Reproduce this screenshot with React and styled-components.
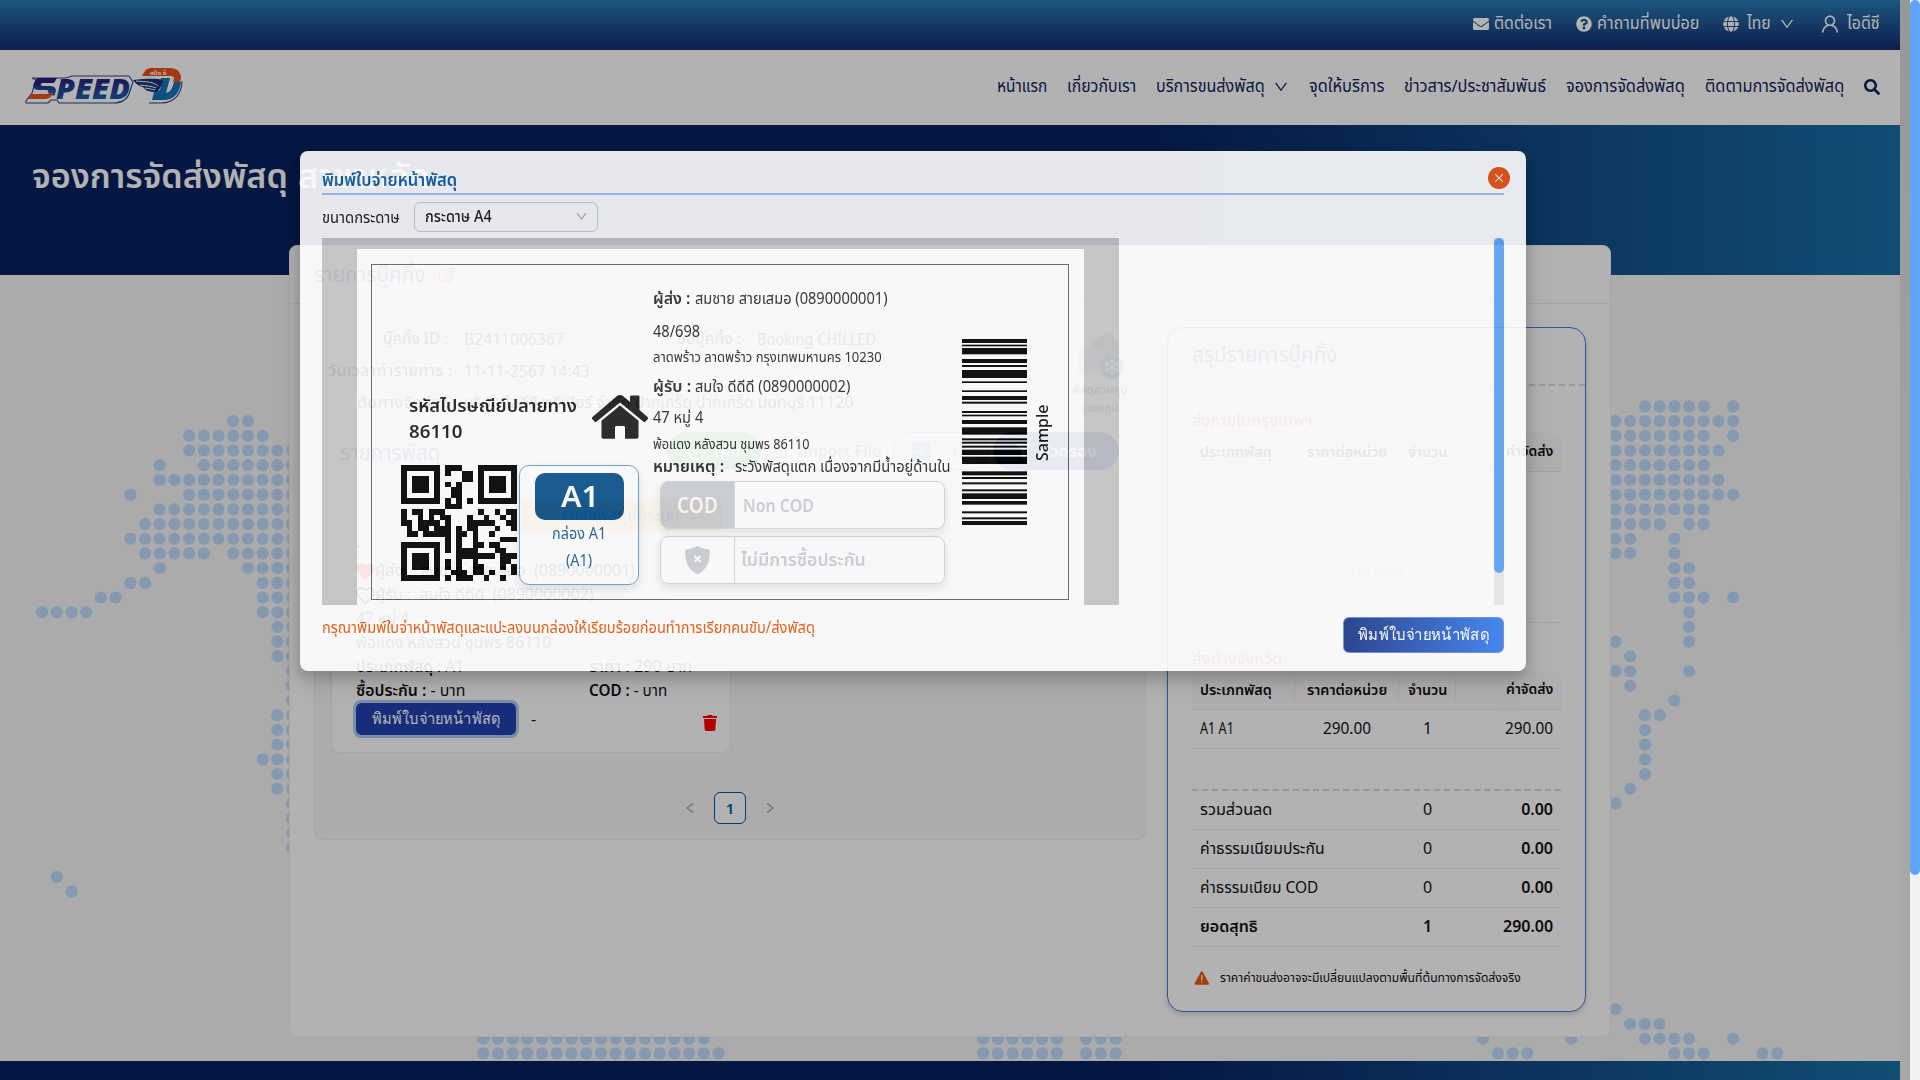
import React, { useLayoutEffect, useRef, useState } from "react";
import styled, { createGlobalStyle } from "styled-components";
import {
  FaEnvelope, FaQuestionCircle, FaGlobe, FaSearch, FaTrash, FaRegEdit,
  FaHeart, FaRegHeart, FaSnowflake, FaFilter,
} from "react-icons/fa";
import { AiOutlineUser, AiOutlineDown, AiOutlineLeft, AiOutlineRight, AiOutlineClose, AiOutlinePlusCircle, AiOutlineFileExcel, AiOutlineSortAscending } from "react-icons/ai";
import { IoWarning } from "react-icons/io5";

const Global = createGlobalStyle`
  * { box-sizing: border-box; }
  html, body { margin: 0; overflow: hidden; }
  body { font-family: "Noto Sans", "Noto Sans Thai", "Open Sans", sans-serif; font-size: 15px; color: #111; }
`;

/* Text that always fills exactly the width reserved for it. */
const FitBox = styled.span`
  display: inline-block;
  flex: none;
  width: ${(p) => p.$w}px;
  white-space: nowrap;
  line-height: inherit;
`;
const FitInner = styled.span`
  display: inline-block;
  transform-origin: 0 50%;
  line-height: inherit;
`;
function Fit({ w, children }) {
  const ref = useRef(null);
  const [k, setK] = useState(1);
  useLayoutEffect(() => {
    const n = ref.current.offsetWidth;
    if (n) setK(w / n);
  }, [w, children]);
  return (
    <FitBox $w={w}>
      <FitInner ref={ref} style={{ transform: `scaleX(${k})` }}>{children}</FitInner>
    </FitBox>
  );
}

const Root = styled.div`
  display: grid;
  grid-template-columns: 1900px 10px 10px;
  width: 1920px;
  height: 1080px;
  overflow: hidden;
`;
const Page = styled.div`display: flex; flex-direction: column; height: 1080px; overflow: hidden;`;
const InnerTrack = styled.div`background: linear-gradient(#d6dada, #eeefef 60%, #f1f1f1);`;
const Track = styled.div`background: #f1f1f1; position: relative; z-index: 5;`;
const Thumb = styled.div`height: ${(p) => p.$h}px; background: #60a5fa; border-radius: 5px;`;
const Mask = styled.div`position: fixed; left: 0; top: 0; width: 1910px; height: 1080px; background: rgba(0, 0, 0, 0.3); z-index: 3;`;

const TopBar = styled.div`
  height: 50px;
  flex: none;
  background: linear-gradient(#277bb4, #152b6d);
  color: #fff;
  display: flex;
  align-items: center;
  justify-content: flex-end;
  gap: 24px;
  padding: 0 20px 2px 0;
  font-size: 17px;
`;
const TopItem = styled.div`
  display: flex; align-items: center; gap: ${(p) => p.$gap || 5}px;
  svg { flex: none; }
`;

const NavBar = styled.div`
  height: 75px;
  flex: none;
  background: #fff;
  display: flex;
  align-items: center;
  justify-content: space-between;
  padding: 0 20px 1px 24px;
`;
const NavLinks = styled.nav`
  display: flex; align-items: center; gap: 20px; color: #12225a; font-size: 17px;
`;
const NavItem = styled.div`display: flex; align-items: center; gap: 8px;`;

const Hero = styled.div`
  height: 150px;
  flex: none;
  background: linear-gradient(90deg, #062160 60%, #1a6fa6);
  color: #fff;
  padding: 27px 0 0 32px;
  font-size: 34px;
  font-weight: 600;
  line-height: 46px;
  display: flex;
  gap: 10px;
`;
const Main = styled.main`
  height: 786px; flex: none; background: #f5f5f5; position: relative; padding-left: 289px;
`;
const Dots = styled.svg`position: absolute; left: 0; top: 0;`;
const Footer = styled.div`flex: 1; background: linear-gradient(90deg, #062160 60%, #1a6fa6);`;

const Card = styled.section`
  position: relative;
  width: 1322px;
  height: 792px;
  margin-top: -30px;
  background: #fff;
  border: 1px solid #f0f0f0;
  border-radius: 8px;
`;
const CardHead = styled.header`
  height: 58px;
  border-bottom: 1px solid #ededed;
  padding-left: 24px;
  display: flex;
  align-items: center;
  gap: 9px;
  color: #0e5a92;
  font-size: 22px;
`;
const EditBox = styled.span`
  width: 25px; height: 25px; border: 1px solid #eee; border-radius: 4px;
  display: grid; place-items: center; color: #ea580c; font-size: 16px;
`;
const Columns = styled.div`display: flex; gap: 21px; padding: 23px 0 0 24px;`;
const Left = styled.div`width: 832px;`;
const Info = styled.div`height: 100px; display: flex; justify-content: space-between; padding-right: 2px;`;
const InfoRows = styled.div`margin-top: -4px; font-size: 16px;`;
const InfoRow = styled.div`height: 32px; display: flex; align-items: center; gap: 16px;`;
const InfoLabel = styled.div`width: ${(p) => p.$w}px; text-align: right; color: #222; font-weight: 500;`;
const Chilled = styled.div`
  width: 88px; height: 90px; border-radius: 8px; background: #eaf4ff; text-align: center;
  font-size: 12px; line-height: 18px; font-weight: 600; color: #555; padding-top: 4px;
  svg { display: block; margin: 0 auto; }
`;
const Panel = styled.div`
  height: 413px; border: 1px solid #eee; border-radius: 8px; background: #f7f7f7;
  display: flex; flex-direction: column;
`;
const PanelHead = styled.div`
  height: 70px; padding: 4px 26px 0 25px; display: flex; align-items: flex-start; justify-content: space-between;
  color: #0e5a92; font-size: 21px; line-height: 40px;
`;
const HeadTitle = styled.div`display: flex; align-items: center; gap: 6px;`;
const Check = styled.span`width: 15px; height: 15px; border: 1px solid #ddd; border-radius: 4px; display: inline-block;`;
const Pills = styled.div`display: flex; gap: 5px;`;
const Pill = styled.div`
  width: ${(p) => p.$w}px; height: 38px; border-radius: 19px; background: ${(p) => p.$bg}; color: ${(p) => p.$fg};
  border: 1px solid ${(p) => p.$bd}; display: flex; align-items: center; justify-content: center; gap: ${(p) => p.$gap || 8}px;
  font-size: 16px; font-weight: 600;
`;
const Item = styled.div`
  width: 400px; height: 255px; margin-left: 16px; border: 1px solid #eee; border-radius: 8px; background: #fff;
  padding: 0 9px 0 24px;
`;
const Badge = styled.div`
  width: 200px; height: 32px; margin-left: auto; background: #fdc36b; color: #2563a8; border-radius: 4px;
  text-align: center; line-height: 32px; font-size: 17px;
`;
const Line = styled.div`
  height: ${(p) => p.$h || 24}px; display: flex; align-items: center; font-size: 16px;
  justify-content: ${(p) => (p.$spread ? "space-between" : "flex-start")};
  gap: ${(p) => p.$gap || 0}px;
`;
const Half = styled.div`width: 233px; display: flex; gap: 4px;`;
const B = styled.b`font-weight: 600;`;
const RowButton = styled.button`
  width: 160px; height: 32px; border: 0; border-radius: 5px; background: #213fb0; color: #fff; margin: 0;
  outline: 3px solid #a9cdf0; font: 16px/30px "Noto Sans", sans-serif; padding: 0 0 2px;
`;
const Trash = styled(FaTrash)`margin: 7px 3px 0 0; color: #ff0000; font-size: 16px;`;
const Pager = styled.div`
  margin: 39px 0 0 368px; display: flex; align-items: center; gap: 17px; color: #999; font-size: 14px;
`;
const PageNo = styled.span`
  width: 32px; height: 32px; border: 1px solid #00599a; border-radius: 6px; color: #00599a; font-weight: 600;
  display: grid; place-items: center; margin: 0; background: #fff; font-size: 15px;
`;

const Summary = styled.aside`
  width: 419px; height: 685px; border: 1px solid #3b7fe8; border-radius: 16px; background: #fff;
  box-shadow: 0 3px 5px rgba(0, 0, 0, 0.15);
  display: flex; flex-direction: column;
`;
const SumTitle = styled.div`
  height: 58px; border-bottom: 2px dashed #ddd; padding-left: 24px; color: #0e5a92; font-size: 21px; line-height: 53px;
`;
const SumBody = styled.div`padding: 0 24px;`;
const Zone = styled.div`color: #ea580c; font-size: 16px; font-weight: 500; height: 26px; line-height: 26px; margin-top: ${(p) => p.$mt}px;`;
const Grid = styled.div`
  display: grid; grid-template-columns: 103px 104px 57px 1fr; align-items: center; height: 39px;
  border-bottom: 1px solid #ececec; font-size: 16px;
  background: ${(p) => (p.$head ? "#fafafa" : "transparent")};
  border-radius: ${(p) => (p.$head ? "8px 8px 0 0" : 0)};
`;
const Cell = styled.div`
  text-align: ${(p) => p.$a || "center"}; font-weight: ${(p) => (p.$b ? 600 : 400)};
  padding: 0 8px; height: ${(p) => (p.$sep ? 22 : 38)}px; line-height: ${(p) => (p.$sep ? 21 : 36)}px;
  border-right: ${(p) => (p.$sep ? "1px solid #ececec" : 0)}; white-space: nowrap;
  display: flex; justify-content: ${(p) => ({ left: "flex-start", right: "flex-end" }[p.$a] || "center")};
  font-size: ${(p) => (p.$sep || p.$small ? 14 : 16)}px;
`;
const Empty = styled.div`
  height: 151px; border-bottom: 1px solid #ececec; display: flex; flex-direction: column; align-items: center;
  padding-top: 40px; color: #c4c4c4; font-size: 14px; gap: 8px;
`;
const Dash = styled.div`height: 42px; border-bottom: 2px dashed #d5d9de;`;
const Note = styled.div`display: flex; align-items: center; gap: 9px; height: 62px; padding-left: 1px; font-size: 13px;`;

const Modal = styled.div`
  position: fixed; left: 300px; top: 151px; width: 1226px; height: 520px; background: #fff; border-radius: 8px;
  opacity: 0.9; z-index: 4; box-shadow: 0 6px 16px rgba(0, 0, 0, 0.25), 0 9px 28px 8px rgba(0, 0, 0, 0.08);
  padding: 16px 22px 0;
`;
const Close = styled.div`
  position: absolute; right: 16px; top: 16px; width: 22px; height: 22px; border-radius: 50%; background: #ee5514;
  color: #fff; display: grid; place-items: center; font-size: 12px;
`;
const ModalTitle = styled.div`
  height: 28px; border-bottom: 2px solid #a6c5fb; color: #12609f; font-size: 17px; font-weight: 600; line-height: 26px;
`;
const SizeRow = styled.div`
  margin-top: 7px; height: 30px; display: flex; align-items: center; gap: 14px; font-size: 15.5px; color: #222; line-height: 26px;
`;
const Select = styled.div`
  width: 184px; height: 30px; border: 1px solid #cfcfd3; border-radius: 6px; display: flex; align-items: center;
  justify-content: space-between; padding: 0 9px 2px 10px; font-weight: 500;
  svg { color: #aaa; font-size: 13px; }
`;
const Scroll = styled.div`margin-top: 6px; height: 367px; display: flex; justify-content: space-between; overflow: hidden;`;
const Desk = styled.div`width: 797px; background: #c8c8c8; padding: 11px 35px 0;`;
const Paper = styled.div`width: 727px; height: 356px; background: #fff; padding: 15px 0 0 14px;`;
const Frame = styled.div`
  width: 698px; height: 336px; border: 1.5px solid #666; color: #1f1f1f;
  display: grid; grid-template-columns: 281px 309px 1fr;
`;
const ModalTrack = styled.div`width: 10px; background: #eaeaea;`;
const LabelLeft = styled.div`padding: 130px 0 0 29px;`;
const Postal = styled.div`display: flex; gap: 15px; padding-left: 8px; height: 70px;`;
const PostalText = styled.div`margin-top: -3px; font-size: 18px; line-height: 26px; font-weight: 600; width: 168px;`;
const Codes = styled.div`display: flex; gap: 2px; width: 300px;`;
const BoxCard = styled.div`
  width: 120px; height: 120px; border: 1px solid #6ea0c9; border-radius: 10px; padding-top: 7px; text-align: center;
  color: #1c6099; font-size: 15.5px; line-height: 27px; box-shadow: 0 4px 8px rgba(0, 0, 0, 0.12);
`;
const BoxName = styled.div`
  width: 89px; height: 47px; margin: 0 auto 0; border-radius: 10px; background: #09518e; color: #fff;
  font-size: 29px; font-weight: 600; line-height: 46px;
`;
const Address = styled.div`color: #2b2b2b; padding-top: 18px;`;
const ARow = styled.div`
  height: ${(p) => p.$h}px; display: flex; align-items: center; gap: ${(p) => p.$gap || 4}px; font-size: ${(p) => p.$s || 15.5}px;
`;
const Options = styled.div`padding: 6px 0 0 7px; display: flex; flex-direction: column; gap: 7px;`;
const Option = styled.div`
  width: 285px; height: 48px; border: 1px solid #d5d8de; border-radius: 8px; display: flex;
  align-items: center; color: #ccd0d8; font-size: 18px; font-weight: 600; overflow: hidden;
  box-shadow: 0 4px 8px rgba(0, 0, 0, 0.1);
`;
const OptionIcon = styled.div`
  width: 74px; height: 48px; display: grid; place-items: center; margin-right: ${(p) => (p.$fill ? 8 : 6)}px;
  background: ${(p) => (p.$fill ? "#ccd0d8" : "transparent")}; color: #fff; font-size: 21px;
  border-right: 1px solid #d5d8de;
`;
const Side = styled.div`display: flex; padding-top: 74px; height: 270px;`;
const Vertical = styled.div`
  writing-mode: vertical-rl; transform: rotate(180deg); color: #111; font: 500 16px/24px "Noto Sans"; height: 57px; margin: 65px 0 0 3px;
`;
const Foot = styled.div`
  display: flex; justify-content: space-between; align-items: flex-start; color: #ea580c; font-size: 15.5px; line-height: 22px; padding-top: 11px;
`;
const PrintButton = styled.button`
  margin-top: 1px; width: 161px; height: 36px; border: 1px solid #6c8fd6; border-radius: 6px; color: #fff; padding: 0 0 2px;
  background: linear-gradient(90deg, #1e3a8a, #3b82f6); font: 500 16px/30px "Noto Sans", sans-serif;
`;

const PITCH = 14.705;
/* [row, [first column, last column], ...] */
const DOTS = [
  [-1, [109, 113], [115, 115]],
  [0, [13, 14], [107, 115]],
  [1, [10, 15], [107, 113], [115, 115]],
  [2, [10, 17], [107, 114]],
  [3, [8, 8], [11, 17], [107, 113]],
  [4, [8, 17], [107, 114]],
  [5, [6, 6], [10, 17], [107, 115]],
  [6, [8, 17], [107, 113]],
  [7, [7, 17], [107, 110], [112, 113]],
  [8, [6, 17], [107, 108], [111, 111]],
  [9, [7, 11], [13, 17], [107, 108], [111, 111]],
  [10, [8, 8], [14, 17], [111, 112]],
  [11, [6, 7], [15, 17], [111, 112]],
  [12, [4, 5], [15, 17], [111, 113], [115, 115]],
  [13, [0, 3], [15, 17], [112, 112]],
  [14, [16, 17], [112, 112]],
  [15, [16, 17], [107, 107], [112, 112]],
  [16, [16, 17], [108, 108]],
  [17, [17, 17], [107, 108], [112, 112]],
  [18, [17, 17], [108, 108]],
  [19, [17, 17], [111, 111]],
  [20, [16, 17], [109, 110]],
  [21, [16, 17], [109, 109]],
  [22, [16, 17], [109, 109]],
  [23, [15, 17], [109, 109]],
  [24, [16, 17], [109, 109]],
  [25, [16, 17], [108, 108]],
  [26, [17, 17], [107, 107]],
  [27, [17, 17]], [28, [17, 17]], [29, [17, 17]],
  [31, [1, 1]], [32, [2, 2]],
  [40, [107, 107]],
  [41, [108, 110]],
  [42, [30, 45], [64, 69], [71, 73], [98, 98], [104, 104], [109, 112], [115, 115]],
  [43, [30, 46], [64, 69], [71, 73], [99, 101], [111, 113], [117, 118]],
];
function DotMap() {
  const out = [];
  DOTS.forEach(([r, ...runs]) =>
    runs.forEach(([a, b]) => {
      for (let c = a; c <= b; c++)
        out.push(<circle key={`${r}-${c}`} cx={42.1 + c * PITCH} cy={146.1 + r * PITCH} r="6.1" />);
    })
  );
  return <Dots width="1900" height="786" fill="#bfdbfe">{out}</Dots>;
}

const QR = [
  "1111111.111...1111111",
  "1.....1.1..11.1.....1",
  "1.111.1....11.1.111.1",
  "1.111.1.1.1...1.111.1",
  "1.111.1..11...1.111.1",
  "1.....1..11...1.....1",
  "1111111.1.1.1.1111111",
  "........111..........",
  "1.11.111......1..1.11",
  "1..1.1.11...1..1..1.1",
  "11.1111.1...11111..11",
  ".1.11.111.1.11...1..1",
  ".11.11111.11.1..1....",
  "........1.1..1....111",
  "1111111.1.1..11.11...",
  "1.....1.1.1111...11..",
  "1.111.1...1111111.111",
  "1.111.1.1.1..1....11.",
  "1.111.1.1.1..11...1.1",
  "1.....1..111.11.1...1",
  "1111111.1.111..1..1..",
];
function QrCode() {
  return (
    <svg width="116" height="116" viewBox="0 0 21 21" shapeRendering="crispEdges">
      {QR.map((row, y) => [...row].map((v, x) => (v === "1" ? <rect key={`${x}-${y}`} x={x} y={y} width="1" height="1" /> : null)))}
    </svg>
  );
}

/* [offset, thickness] of each bar, in thirds of a pixel */
const BARS = [
  [0, 12], [17, 5], [27, 19], [60, 12], [78, 6], [93, 24], [127, 5], [154, 5], [171, 12], [188, 6], [216, 6], [227, 5],
  [243, 12], [265, 22], [298, 6], [308, 6], [320, 6], [332, 16], [353, 22], [397, 12], [414, 6], [430, 6], [451, 6],
  [463, 17], [486, 11], [517, 6], [535, 6], [546, 12],
];
function Barcode() {
  return (
    <svg width="65" height="186" viewBox="0 0 65 558" preserveAspectRatio="none">
      {BARS.map(([y, h]) => <rect key={y} x="0" y={y} width="65" height={h} />)}
    </svg>
  );
}

function Tiles() {
  return (
    <svg width="19" height="19" viewBox="0 0 19 19" fill="currentColor">
      <path d="M0 0h9v9H0zM10 0h9v9h-9zM0 10h9v9H0zM10 10h9v9h-9z" />
    </svg>
  );
}

const LogoSvg = styled.svg`overflow: visible; flex: none;`;
function Logo() {
  return (
    <LogoSvg width="162" height="38" viewBox="0 0 162 38">
      <defs>
        <linearGradient id="lg" x1="0" y1="0" x2="0" y2="1">
          <stop offset="0.2" stopColor="#2b1a78" />
          <stop offset="1" stopColor="#1573b8" />
        </linearGradient>
      </defs>
      <path d="M8 10l4 2-4 13-6 8v2h22l3-3h6l2 3h54c9 0 15-4 17-12l3-9-4-6H48l-6 2z" fill="#fff" stroke="#3c3c86" strokeWidth="1.1" />
      <path d="M118 9c3-6 6-9 11-9h17c8 0 13 5 12 13-1 13-8 22-21 22h-12l4-12-14-3-6-8z" fill="#fff" />
      <path d="M158 13c0 13-8 22-21 22h-12" fill="none" stroke="#3c3c86" strokeWidth="1.1" />
      <text x="32" y="31" textLength="74" lengthAdjust="spacingAndGlyphs" fontFamily="Open Sans, Noto Sans" fontSize="29" fontWeight="800" fontStyle="italic" fill="url(#lg)">PEED</text>
      <path d="M13 10h20l-3 5H19c-3 0-3 3 0 3h7c6 0 7 4 5 8l-1 2-6-3c1-2 0-3-2-3h-7c-5 0-7-3-5-7z" fill="url(#lg)" />
      <path d="M7 26h17l5-2c-1 5-4 7-9 7H4z" fill="#e8521c" />
      <path d="M118 8c3-6 5-8 10-8h18c7 0 11 4 11 10l-1 4h-7l1-3c0-2-1-3-3-3z" fill="#e8521c" />
      <path d="M137 10h9l-4 15c4-1 6-4 7-8l1-3h7c-1 11-8 18-17 18h-12l2-8c6 0 8-3 7-14z" fill="#1573b8" />
      <path d="M109 12c11-1 22-2 30 0-1 5-3 9-6 12-9 0-12-2-14-5-5-1-8-4-10-7z" fill="#1b3478" />
      <path d="M112 13c10 1 16 0 22 5M116 17c7 1 12 1 16 3M121 20c4 1 7 1 10 2" stroke="#fff" strokeWidth="1" fill="none" />
      <text x="126" y="6.500" fontSize="6" fill="#fff" fontWeight="700">สปีด ดี</text>
    </LogoSvg>
  );
}

function House() {
  return (
    <svg width="56" height="44" viewBox="0 0 56 44" fill="#1f1f1f">
      <path d="M28 0c1.500 0 2.500.6 3.600 1.600L38 7V2c0-1 .5-1.500 1.500-1.500H46c1 0 1.500.5 1.500 1.500v13l8 7c.7.6.7 1.500.1 2.200L53.500 26.500c-.6.7-1.500.7-2.200.1L28 7.500 4.700 26.600c-.7.6-1.600.6-2.200-.1L.4 24.200c-.6-.7-.6-1.600.1-2.200L24.400 1.600C25.500.6 26.500 0 28 0z" />
      <path d="M28 10.500l18.500 15.300V42c0 1-.7 1.700-1.700 1.700H33V32.500c0-1-.6-1.500-1.500-1.500h-7c-.9 0-1.500.5-1.500 1.500v11.200H11.200c-1 0-1.700-.7-1.700-1.700V25.800z" />
    </svg>
  );
}

function Shield() {
  return (
    <svg width="25" height="29" viewBox="0 0 25 29">
      <path d="M12.500 0c3 2 7 3.200 11 3.400 1 0 1.300.5 1.300 1.400C25 15 22 24 12.500 28.500 3 24 0 15 .2 4.800c0-.9.4-1.400 1.300-1.400C5.500 3.200 9.500 2 12.500 0z" fill="#ccd0d8" />
      <path d="M9.500 10l6 6m0-6l-6 6" stroke="#fff" strokeWidth="2" />
    </svg>
  );
}

const NAV = [
  ["หน้าแรก", 50], ["เกี่ยวกับเรา", 69], ["บริการขนส่งพัสดุ", 109, true], ["จุดให้บริการ", 75],
  ["ข่าวสาร/ประชาสัมพันธ์", 142], ["จองการจัดส่งพัสดุ", 119], ["ติดตามการจัดส่งพัสดุ", 139],
];
const TOTALS = [
  ["รวมส่วนลด", 72, "0", "0.00"],
  ["ค่าธรรมเนียมประกัน", 125, "0", "0.00"],
  ["ค่าธรรมเนียม COD", 118, "0", "0.00"],
  ["ยอดสุทธิ", 58, "1", "290.00"],
];

function TableHead() {
  return (
    <Grid $head>
      <Cell $a="left" $b $sep><Fit w={72}>ประเภทพัสดุ</Fit></Cell>
      <Cell $b $sep><Fit w={80}>ราคาต่อหน่วย</Fit></Cell>
      <Cell $b $sep><Fit w={39}>จำนวน</Fit></Cell>
      <Cell $a="right" $b $small><Fit w={47}>ค่าจัดส่ง</Fit></Cell>
    </Grid>
  );
}

export default function App() {
  return (
    <Root>
      <Global />
      <Page>
        <TopBar>
          <TopItem><FaEnvelope size={16} /><Fit w={58}>ติดต่อเรา</Fit></TopItem>
          <TopItem><FaQuestionCircle size={16} /><Fit w={102}>คำถามที่พบบ่อย</Fit></TopItem>
          <TopItem $gap={8}><FaGlobe size={16} /><Fit w={24}>ไทย</Fit><AiOutlineDown size={16} /></TopItem>
          <TopItem $gap={6}><AiOutlineUser size={22} /><Fit w={33}>ไอดีซี</Fit></TopItem>
        </TopBar>
        <NavBar>
          <Logo />
          <NavLinks>
            {NAV.map(([t, w, more]) => (
              <NavItem key={t}><Fit w={w}>{t}</Fit>{more && <AiOutlineDown size={16} />}</NavItem>
            ))}
            <FaSearch size={16} />
          </NavLinks>
        </NavBar>
        <Hero><Fit w={256}>จองการจัดส่งพัสดุ</Fit><Fit w={132}>สาขาหลัก</Fit></Hero>
        <Main>
          <DotMap />
          <Card>
            <CardHead><Fit w={111}>รายการบุ๊คกิ้ง</Fit><EditBox><FaRegEdit /></EditBox></CardHead>
            <Columns>
              <Left>
                <Info>
                  <InfoRows>
                    <InfoRow>
                      <InfoLabel $w={134}><Fit w={65}>บุ๊คกิ้ง ID :</Fit></InfoLabel><Fit w={100}>B2411006367</Fit>
                      <InfoLabel $w={161}><Fit w={64}>ชื่อบุ๊คกิ้ง :</Fit></InfoLabel><Fit w={119}>Booking CHILLED</Fit>
                    </InfoRow>
                    <InfoRow><InfoLabel $w={134}><Fit w={124}>วันเวลาทำรายการ :</Fit></InfoLabel><Fit w={126}>11-11-2567 14:43</Fit></InfoRow>
                    <InfoRow><InfoLabel $w={134}><Fit w={92}>ต้นทางจัดส่ง :</Fit></InfoLabel><Fit w={390}>บริษัท ไอดีซี พรีเมียร์ จำกัด ปากเกร็ด ปากเกร็ด นนทบุรี 11120</Fit></InfoRow>
                  </InfoRows>
                  <Chilled>
                    <svg width="52" height="50" viewBox="0 0 52 50">
                      <rect x="20" y="4" width="24" height="24" rx="4" fill="#7f9fb0" transform="rotate(-28 32 16)" />
                      <rect x="4" y="18" width="28" height="24" rx="3" fill="#a7c3d2" />
                      <path d="M6 30l6-10M9 32l7-12" stroke="#fff" strokeWidth="2" />
                      <circle cx="38" cy="36" r="12" fill="#4f93c4" />
                      <FaSnowflake x="30" y="28" size={16} color="#fff" />
                    </svg>
                    <Fit w={56}>พัสดุควบคุม</Fit><Fit w={38}>อุณหภูมิ</Fit>
                  </Chilled>
                </Info>
                <Panel>
                  <PanelHead>
                    <HeadTitle><Fit w={100}>รายการพัสดุ</Fit><Check /></HeadTitle>
                    <Pills>
                      <Pill $w={94} $bg="#3fbf6a" $fg="#fff" $bd="#3fbf6a"><AiOutlinePlusCircle size={19} />เพิ่ม</Pill>
                      <Pill $w={122} $bg="#fff" $fg="#3fae64" $bd="#9fdcb2"><AiOutlineFileExcel size={16} /><Fit w={84}>Import File</Fit></Pill>
                      <Pill $w={95} $bg="#fff" $fg="#7fb2dc" $bd="#6d8fe0" $gap={18}><Tiles /><AiOutlineSortAscending size={20} /></Pill>
                      <Pill $w={126} $bg="#1e46c0" $fg="#fff" $bd="#1e46c0"><FaFilter size={15} /><Fit w={58}>ตัวกรอง</Fit></Pill>
                    </Pills>
                  </PanelHead>
                  <Item>
                    <Badge><Fit w={118}>รอส่งพัสดุเข้าระบบ</Fit></Badge>
                    <Line $h={28} $spread><span>-</span><Check /></Line>
                    <Line><FaHeart size={19} color="#ff0000" /><Fit w={260}>ผู้ส่ง :&nbsp; สมชาย สายเสมอ&nbsp; (0890000001)</Fit></Line>
                    <Line><FaRegHeart size={19} /><Fit w={218}>ผู้รับ :&nbsp; สมใจ ดีดีดี&nbsp; (0890000002)</Fit></Line>
                    <Line><Fit w={53}>47 หมู่ 4</Fit></Line>
                    <Line><Fit w={195}>พ้อแดง หลังสวน ชุมพร 86110</Fit></Line>
                    <Line><Half><Fit w={108}><B>ประเภทพัสดุ :</B> A1</Fit></Half><Fit w={103}><B>ราคา :</B> 290 บาท</Fit></Line>
                    <Line><Half><Fit w={109}><B>ซื้อประกัน :</B> - บาท</Fit></Half><Fit w={78}><B>COD :</B> - บาท</Fit></Line>
                    <Line $h={32} $spread>
                      <Line $gap={15}><RowButton><Fit w={128}>พิมพ์ใบจ่ายหน้าพัสดุ</Fit></RowButton>-</Line>
                      <Trash />
                    </Line>
                  </Item>
                  <Pager><AiOutlineLeft /><PageNo>1</PageNo><AiOutlineRight /></Pager>
                </Panel>
              </Left>
              <Summary>
                <SumTitle><Fit w={145}>สรุปรายการบุ๊คกิ้ง</Fit></SumTitle>
                <SumBody>
                  <Zone $mt={21}><Fit w={121}>ส่งภายในกรุงเทพฯ</Fit></Zone>
                  <TableHead />
                  <Empty>
                    <svg width="60" height="40" viewBox="0 0 60 40" fill="none" stroke="#d9d9d9">
                      <ellipse cx="30" cy="33" rx="29" ry="6" fill="#f5f5f5" stroke="none" />
                      <path d="M8 14L17 3q2-2 4-2h18q2 0 4 2l9 11v21H8zM8 14h12v6h20v-6h12" />
                    </svg>
                    <span>No data</span>
                  </Empty>
                  <Zone $mt={22}><Fit w={91}>ส่งต่างจังหวัด</Fit></Zone>
                  <TableHead />
                  <Grid><Cell $a="left"><Fit w={34}>A1 A1</Fit></Cell><Cell><Fit w={48}>290.00</Fit></Cell><Cell>1</Cell><Cell $a="right"><Fit w={48}>290.00</Fit></Cell></Grid>
                  <Dash />
                  {TOTALS.map(([t, w, n, v], i) => (
                    <Grid key={t}>
                      <Cell $a="left" $b={i === 3}><Fit w={w}>{t}</Fit></Cell><Cell />
                      <Cell $b={i === 3}>{n}</Cell><Cell $a="right" $b><Fit w={i === 3 ? 50 : 32}>{v}</Fit></Cell>
                    </Grid>
                  ))}
                  <Note><IoWarning size={18} color="#ea580c" /><Fit w={301}>ราคาค่าขนส่งอาจจะมีเปลี่ยนแปลงตามพื้นที่ต้นทางการจัดส่งจริง</Fit></Note>
                </SumBody>
              </Summary>
            </Columns>
          </Card>
        </Main>
        <Footer />
      </Page>
      <InnerTrack />
      <Track><Thumb $h={875} /></Track>
      <Mask />
      <Modal>
        <Close><AiOutlineClose /></Close>
        <ModalTitle><Fit w={135}>พิมพ์ใบจ่ายหน้าพัสดุ</Fit></ModalTitle>
        <SizeRow><Fit w={78}>ขนาดกระดาษ</Fit><Select><Fit w={67}>กระดาษ A4</Fit><AiOutlineDown /></Select></SizeRow>
        <Scroll>
          <Desk>
            <Paper>
              <Frame>
                <LabelLeft>
                  <Postal>
                    <PostalText><Fit w={168}>รหัสไปรษณีย์ปลายทาง</Fit><Fit w={53}>86110</Fit></PostalText>
                    <House />
                  </Postal>
                  <Codes>
                    <QrCode />
                    <BoxCard>
                      <BoxName><Fit w={38}>A1</Fit></BoxName>
                      <Fit w={54}>กล่อง A1</Fit><br /><Fit w={26}>(A1)</Fit>
                    </BoxCard>
                  </Codes>
                </LabelLeft>
                <Address>
                  <ARow $h={31}><B><Fit w={38}>ผู้ส่ง :</Fit></B><Fit w={193}>สมชาย สายเสมอ (0890000001)</Fit></ARow>
                  <ARow $h={34}><Fit w={47}>48/698</Fit></ARow>
                  <ARow $h={20} $s={13.5}><Fit w={229}>ลาดพร้าว ลาดพร้าว กรุงเทพมหานคร 10230</Fit></ARow>
                  <ARow $h={37}><B><Fit w={38}>ผู้รับ :</Fit></B><Fit w={155}>สมใจ ดีดีดี (0890000002)</Fit></ARow>
                  <ARow $h={26}><Fit w={50}>47 หมู่ 4</Fit></ARow>
                  <ARow $h={28} $s={13.5}><Fit w={157}>พ้อแดง หลังสวน ชุมพร 86110</Fit></ARow>
                  <ARow $h={16} $gap={11}><B><Fit w={71}>หมายเหตุ :</Fit></B><Fit w={215}>ระวังพัสดุแตก เนื่องจากมีน้ำอยู่ด้านใน</Fit></ARow>
                  <Options>
                    <Option><OptionIcon $fill><Fit w={41}>COD</Fit></OptionIcon><Fit w={71}>Non COD</Fit></Option>
                    <Option><OptionIcon><Shield /></OptionIcon><Fit w={125}>ไม่มีการซื้อประกัน</Fit></Option>
                  </Options>
                </Address>
                <Side><Barcode /><Vertical>Sample</Vertical></Side>
              </Frame>
            </Paper>
          </Desk>
          <ModalTrack><Thumb $h={335} /></ModalTrack>
        </Scroll>
        <Foot><Fit w={493}>กรุณาพิมพ์ใบจ่าหน้าพัสดุและแปะลงบนกล่องให้เรียบร้อยก่อนทำการเรียกคนขับ/ส่งพัสดุ</Fit><PrintButton><Fit w={131}>พิมพ์ใบจ่ายหน้าพัสดุ</Fit></PrintButton></Foot>
      </Modal>
    </Root>
  );
}
